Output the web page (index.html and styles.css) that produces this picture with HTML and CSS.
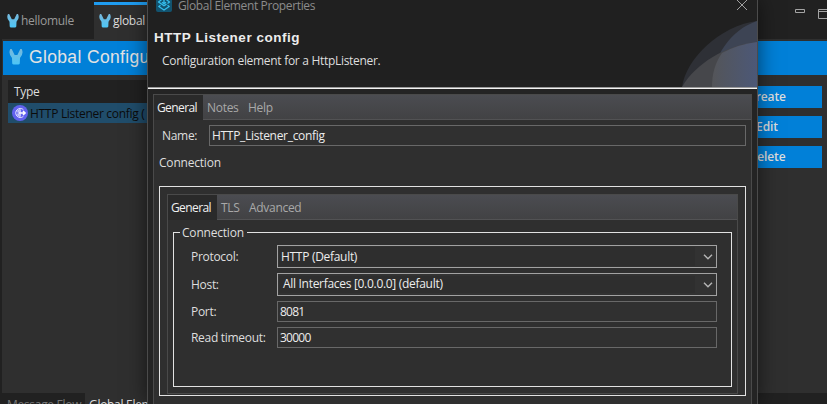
FILE: index.html
```html
<!DOCTYPE html>
<html lang="en">
<head>
<meta charset="utf-8">
<title>Global Element Properties</title>
<link rel="stylesheet" href="styles.css">
</head>
<body>
<svg class="defs" width="0" height="0">
  <defs>
    <linearGradient id="muleFill" x1="0" y1="0" x2="0" y2="1">
      <stop offset="0" stop-color="#78b8dc"/><stop offset="1" stop-color="#4cc6f6"/>
    </linearGradient>
    <symbol id="mule" viewBox="0 0 12 14">
      <path fill="url(#muleFill)" d="M1 0L2.200 0L4.800 5.200H7.200L9.800 0L11 0Q13 4 9.500 7.800L9.300 12.600Q9 13.500 8 13.500H4Q3 13.500 2.700 12.600L2.500 7.800Q-1 4 1 0Z"/>
    </symbol>
  </defs>
</svg>
<div class="workbench">
  <div class="editor-tabs">
    <div class="editor-tab"><svg class="mule-sm"><use href="#mule"/></svg><span class="t-hello">hellomule</span></div>
    <div class="editor-tab active"><svg class="mule-sm"><use href="#mule"/></svg><span class="t-global">global</span></div>
    <div class="window-buttons">
      <svg width="32" height="14" viewBox="0 0 32 14" fill="none" stroke="#a4a4a4"><path d="M0.500 1.500h9v3h-9zM23.500 1.500h9v9h-9zM23.500 3.500h9"/></svg>
    </div>
  </div>
  <div class="editor">
    <div class="banner"><svg class="mule-lg"><use href="#mule"/></svg><span class="t-banner">Global Configu</span></div>
    <div class="content">
      <div class="table">
        <div class="table-head">Type</div>
        <div class="table-row">
          <svg width="16" height="16" viewBox="0 0 16 16"><circle cx="8" cy="8" r="8" fill="#6262ee"/><g fill="none" stroke="#dcdcff"><path d="M11.400 4.600A4.600 4.600 0 1 0 11.400 11.400M8 3.400C5.500 5.500 5.500 10.500 8 12.600M8 3.400V12.600M4 6h5M4 10h5"/><path stroke="#fff" stroke-width="1.400" d="M7 8h6M11 5.900l2.200 2.100-2.200 2.100"/></g></svg>
          <span class="t-row">HTTP Listener config (</span>
        </div>
      </div>
      <div class="actions">
        <div class="action">Create</div>
        <div class="action">Edit</div>
        <div class="action">Delete</div>
      </div>
    </div>
  </div>
  <div class="page-tabs">
    <div class="page-tab t-flow">Message Flow</div>
    <div class="page-tab active t-elem">Global Elem</div>
  </div>
</div>

<div class="dialog">
  <div class="titlebar">
    <svg class="app-icon" width="16" height="16" viewBox="0 0 16 16"><rect width="16" height="16" rx="2" fill="#12536f"/><g fill="none" stroke="#35bdec" stroke-width="1.300" stroke-linejoin="round"><path d="M10.500 3.800L13.500 6 11.500 7.500M5.500 3.800L2.500 6 8 9.800 10.500 8.100M8 3.500V7.500M6 6.200L8 7.800l2-1.600M4.500 9.200L2.800 10.500 8 14l5.200-3.500-1.700-1.200"/></g></svg>
    <span class="t-title">Global Element Properties</span>
    <svg class="close" width="12" height="12" viewBox="0 0 12 12" stroke="#a0a0a0" fill="none"><path d="M1 1l10 10M11 1L1 11"/></svg>
  </div>
  <div class="header">
    <div class="heading">HTTP Listener config</div>
    <div class="description">Configuration element for a HttpListener.</div>
    <svg class="swoosh" width="76" height="66" viewBox="0 0 76 66">
      <defs><linearGradient id="arc" gradientUnits="userSpaceOnUse" x1="30" y1="0" x2="76" y2="0"><stop offset="0" stop-color="#545558"/><stop offset="1" stop-color="#4c5877"/></linearGradient></defs>
      <path fill="#2e3036" d="M1 66C5 38 38 5 76 0V66Z"/>
      <path fill="#3d4454" d="M31 66C31 36 49 9 76 0V66Z"/>
      <path fill="#46474b" d="M1 66C14 43 45 24 76 21V66Z"/>
      <path fill="url(#arc)" d="M31 66C31 53 34 42 41 32Q58 23 76 21V66Z"/>
    </svg>
  </div>
  <div class="dialog-body">
    <div class="folder">
      <div class="tabs"><div class="tab active t-gen">General</div><div class="tab t-notes">Notes</div><div class="tab t-help">Help</div></div>
      <div class="name-row"><label class="t-name">Name:</label><div class="input"><span class="t-value">HTTP_Listener_config</span></div></div>
      <div class="section-label t-conn">Connection</div>
      <div class="outer-group">
        <div class="folder inner">
          <div class="tabs"><div class="tab active t-gen">General</div><div class="tab t-tls">TLS</div><div class="tab t-adv">Advanced</div></div>
          <div class="group">
            <div class="legend t-conn">Connection</div>
            <div class="form">
              <div class="row"><label class="t-proto">Protocol:</label><div class="combo"><div class="combo-text t-http">HTTP (Default)</div><svg width="10" height="6" viewBox="0 0 10 6"><path d="M1 .8l4 4 4-4"/></svg></div></div>
              <div class="row"><label class="t-host">Host:</label><div class="combo editable"><div class="combo-text t-all">All Interfaces [0.0.0.0] (default)</div><svg width="10" height="6" viewBox="0 0 10 6"><path d="M1 .8l4 4 4-4"/></svg></div></div>
              <div class="row"><label class="t-port">Port:</label><div class="input"><span class="t-num">8081</span></div></div>
              <div class="row"><label class="t-read">Read timeout:</label><div class="input"><span class="t-num">30000</span></div></div>
            </div>
          </div>
        </div>
      </div>
    </div>
  </div>
</div>
</body>
</html>
```
FILE: styles.css
```css
* { box-sizing: border-box; }
body { margin: 0; width: 827px; height: 404px; overflow: hidden; background: #212121; color: #dedede; font: 12px/16px "Open Sans", "Noto Sans", sans-serif; letter-spacing: -.3px; white-space: nowrap; position: relative; }
svg { display: block; flex: none; }
.defs { position: absolute; }
.workbench { height: 404px; display: flex; flex-direction: column; overflow: hidden; }
.editor-tabs { height: 39px; flex: none; display: flex; padding-top: 2px; }
.editor-tab { width: 94px; display: flex; align-items: center; gap: 2px; padding: 0 0 3px 7px; color: #999; border-top: 3px solid transparent; }
.editor-tab.active { width: 160px; padding-left: 5px; background: #2f2f2f; border-color: #1f9cf0; color: #dedede; }
.mule-sm { width: 12px; height: 14px; }
.mule-lg { width: 14px; height: 16px; }
.window-buttons { margin-left: auto; padding-top: 6px; }
.editor { margin-left: 2px; padding: 2px 0 0 1px; height: 354px; flex: none; background: #2f2f2f; }
.banner { height: 34px; background: #0180d8; display: flex; align-items: center; gap: 6px; padding: 0 0 2px 6px; font: 17.5px/24px "Liberation Sans", Arial, sans-serif; letter-spacing: .35px; color: #e3e3e3; }
.content { display: flex; justify-content: space-between; padding: 5px 5px 0; }
.table { width: 500px; }
.table-head { height: 23px; padding: 4px 6px; background: #212121; }
.table-row { height: 20px; background: #204d6b; color: #0b0b0b; display: flex; align-items: center; gap: 2px; padding-left: 4px; }
.t-row { padding-top: 2px; }
.actions { width: 110px; padding-top: 6px; display: flex; flex-direction: column; gap: 8px; }
.action { height: 22px; background: #0180d8; line-height: 22px; text-align: center; font-weight: 600; letter-spacing: -.1px; }
.page-tabs { flex: none; height: 20px; padding-left: 3px; display: flex; }
.page-tab { width: 82px; padding: 4px 0 0 4px; color: #777; }
.page-tab.active { width: 120px; background: #2f2f2f; color: #dedede; }

.dialog { position: absolute; left: 147px; top: 0; width: 611px; height: 404px; border: solid #4b4b4b; border-width: 0 1px; background: #242424; box-shadow: 0 0 20px rgba(0,0,0,.55); overflow: hidden; }
.titlebar { height: 21px; display: flex; align-items: flex-start; background: #202020; color: #8c8c8c; padding: 0 9px 0 8px; }
.app-icon { margin-top: -4px; margin-right: 6px; }
.t-title { margin-top: -2px; letter-spacing: -.37px; }
.close { margin: -1px 0 0 auto; }
.header { height: 68px; border-bottom: 1px solid #f2f2f2; box-shadow: inset 0 -1px #999; background: #202020; position: relative; padding-top: 8px; }
.heading { padding-left: 6px; font: bold 13.5px/18px "Liberation Sans", Arial, sans-serif; letter-spacing: .53px; color: #ececec; }
.description { padding: 6px 0 0 14px; }
.swoosh { position: absolute; right: 0; top: 0; }
.dialog-body { padding: 5px 5px 0; }
.folder { border: 1px solid #4a4a4a; height: 330px; background: #2f2f2f; }
.tabs { height: 25px; display: flex; background: linear-gradient(#4b4c51, #424244); border-bottom: 1px solid #525254; }
.tab { height: 25px; line-height: 25px; padding-left: 4px; color: #a9a9a9; }
.tab.active { width: 49px; padding-left: 3px; background: #2a2a2a; color: #f0f0f0; letter-spacing: -.6px; }
.tab.t-notes { width: 41px; }
.tab.t-tls { width: 28px; }
.name-row { display: flex; padding: 5px 5px 0 8px; height: 26px; }
.name-row label { width: 47px; line-height: 21px; }
.input { flex: 1; height: 21px; border: 1px solid #686868; line-height: 19px; padding-left: 2px; color: #ececec; background: #303030; }
.t-num { letter-spacing: -.75px; }
.section-label { padding: 9px 0 0 5px; height: 40px; }
.t-conn { letter-spacing: -.2px; }
.outer-group { margin: 0 5px; height: 210px; border: 1px solid #e2e2e2; padding: 7px; }
.folder.inner { height: 200px; }
.group { margin: 12px 5px 0; height: 155px; border: 1px solid #e2e2e2; }
.legend { width: 67px; height: 16px; margin: -8px 0 0 6px; padding-left: 2px; background: #2f2f2f; }
.form { padding: 4px 14px 0 17px; display: flex; flex-direction: column; gap: 5px; }
.row { display: flex; }
.row .input { height: 21px; }
.row label { width: 86px; height: 21px; line-height: 23px; }
.row .t-port, .row .t-read { line-height: 21px; }
.combo { flex: 1; height: 23px; border: 1px solid #a2a2a2; background: #323232; display: flex; align-items: center; padding: 1px 3px 1px 1px; }
.combo-text { flex: 1; height: 19px; line-height: 19px; margin-right: 8px; padding-left: 2px; background: #2e2e2e; color: #ececec; }
.editable .combo-text { height: 17px; line-height: 16px; padding-left: 4px; }
.combo svg { fill: none; stroke: #b5b5b5; stroke-width: 1.400; }
```
